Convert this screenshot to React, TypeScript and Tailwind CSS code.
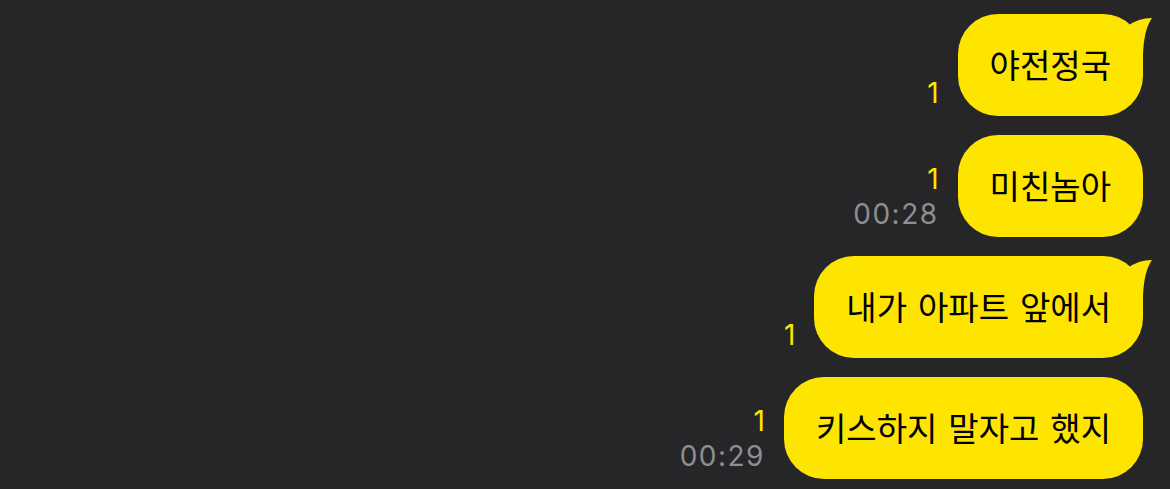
type Message = {
  text: string
  tail?: boolean
  time?: string
}

const messages: Message[] = [
  { text: '야전정국', tail: true },
  { text: '미친놈아', time: '00:28' },
  { text: '내가 아파트 앞에서', tail: true },
  { text: '키스하지 말자고 했지', time: '00:29' },
]

function Tail() {
  return (
    <svg
      className="absolute right-[-10px] top-0 h-[40px] w-[40px]"
      viewBox="0 0 40 40"
      aria-hidden="true"
    >
      <path d="M 15 12 Q 25 4 39 4 Q 31 15 30 40 L 12 40 Z" fill="#FEE500" />
    </svg>
  )
}

function Bubble({ msg }: { msg: Message }) {
  return (
    <div className="flex items-end gap-[19px]">
      <div className="flex flex-col items-end pb-[5px] font-['Inter',sans-serif] text-[28px] leading-[35px]">
        <span className="text-[#FEE500]">1</span>
        {msg.time && <span className="tracking-[1.5px] text-[#8E8E93]">{msg.time}</span>}
      </div>
      <div className="relative flex h-[102px] items-center rounded-[40px] bg-[#FEE500] px-[32px]">
        {msg.tail && <Tail />}
        <span className="relative whitespace-nowrap font-['Noto_Sans_CJK_KR',sans-serif] text-[33px] text-black [word-spacing:3.5px]">
          {msg.text}
        </span>
      </div>
    </div>
  )
}

export default function App() {
  return (
    <div className="h-[489px] w-[1170px] overflow-hidden bg-[#262628]">
      <div className="flex flex-col items-end gap-[19px] pr-[27px] pt-[14px]">
        {messages.map((m, i) => (
          <Bubble key={i} msg={m} />
        ))}
      </div>
    </div>
  )
}
